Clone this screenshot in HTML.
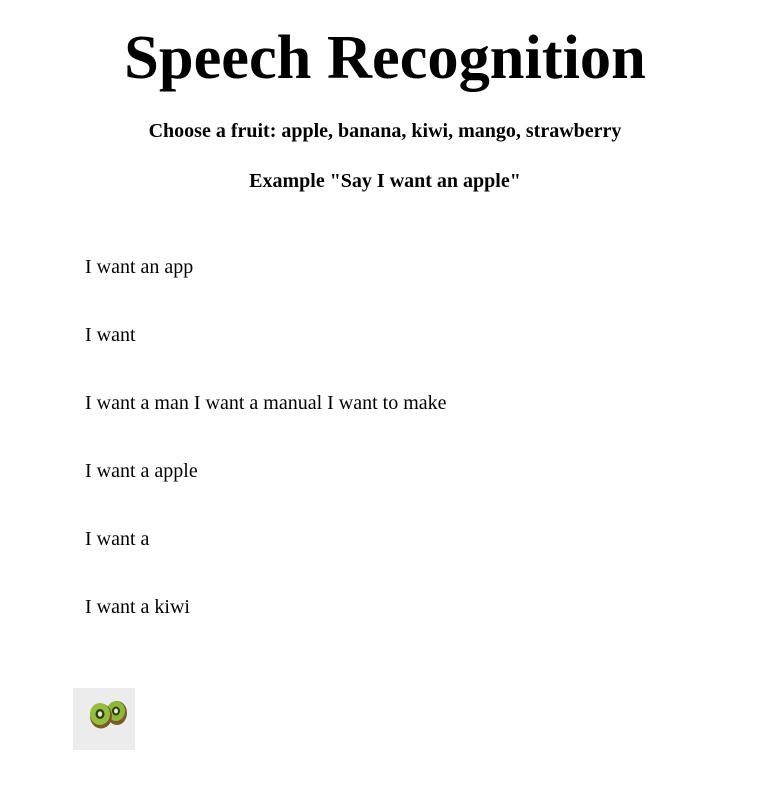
<!DOCTYPE html>
<html><head><style>
body{margin:0;width:780px;height:797px;background:#fff;font-family:"Liberation Serif",serif;color:#000;position:relative;overflow:hidden}
.a{position:absolute;white-space:nowrap}
h1{position:absolute;top:23px;left:0;width:770px;text-align:center;margin:0;font-size:62.4px;line-height:70px;font-weight:bold}
.h{left:0;width:770px;text-align:center;font-weight:bold;font-size:20px;line-height:22px}
.p{left:85px;font-size:20px;line-height:22px}
</style></head><body>
<h1>Speech Recognition</h1>
<div class="a h" style="top:120px">Choose a fruit: apple, banana, kiwi, mango, strawberry</div>
<div class="a h" style="top:170px">Example "Say I want an apple"</div>
<div class="a p" style="top:256px">I want an app</div>
<div class="a p" style="top:324px">I want</div>
<div class="a p" style="top:392px">I want a man I want a manual I want to make</div>
<div class="a p" style="top:460px">I want a apple</div>
<div class="a p" style="top:528px">I want a</div>
<div class="a p" style="top:596px">I want a kiwi</div>
<svg class="a" style="left:73px;top:688px" width="62" height="62" viewBox="0 0 62 62">
<rect width="62" height="62" fill="#ececec"/>
<ellipse cx="44" cy="25" rx="10" ry="12" fill="#7a5a25"/>
<ellipse cx="43" cy="23" rx="9" ry="10" fill="#8cb83a"/>
<ellipse cx="43" cy="23" rx="4" ry="4.5" fill="#2e3a12"/>
<ellipse cx="43" cy="23" rx="2" ry="2.5" fill="#e8eac8"/>
<ellipse cx="28" cy="28" rx="11" ry="12.5" fill="#7a5a25"/>
<ellipse cx="27" cy="26" rx="10" ry="11" fill="#93bf3c"/>
<ellipse cx="27" cy="26" rx="4.5" ry="5" fill="#2e3a12"/>
<ellipse cx="27" cy="26" rx="2.2" ry="2.7" fill="#e8eac8"/>
</svg>
</body></html>
